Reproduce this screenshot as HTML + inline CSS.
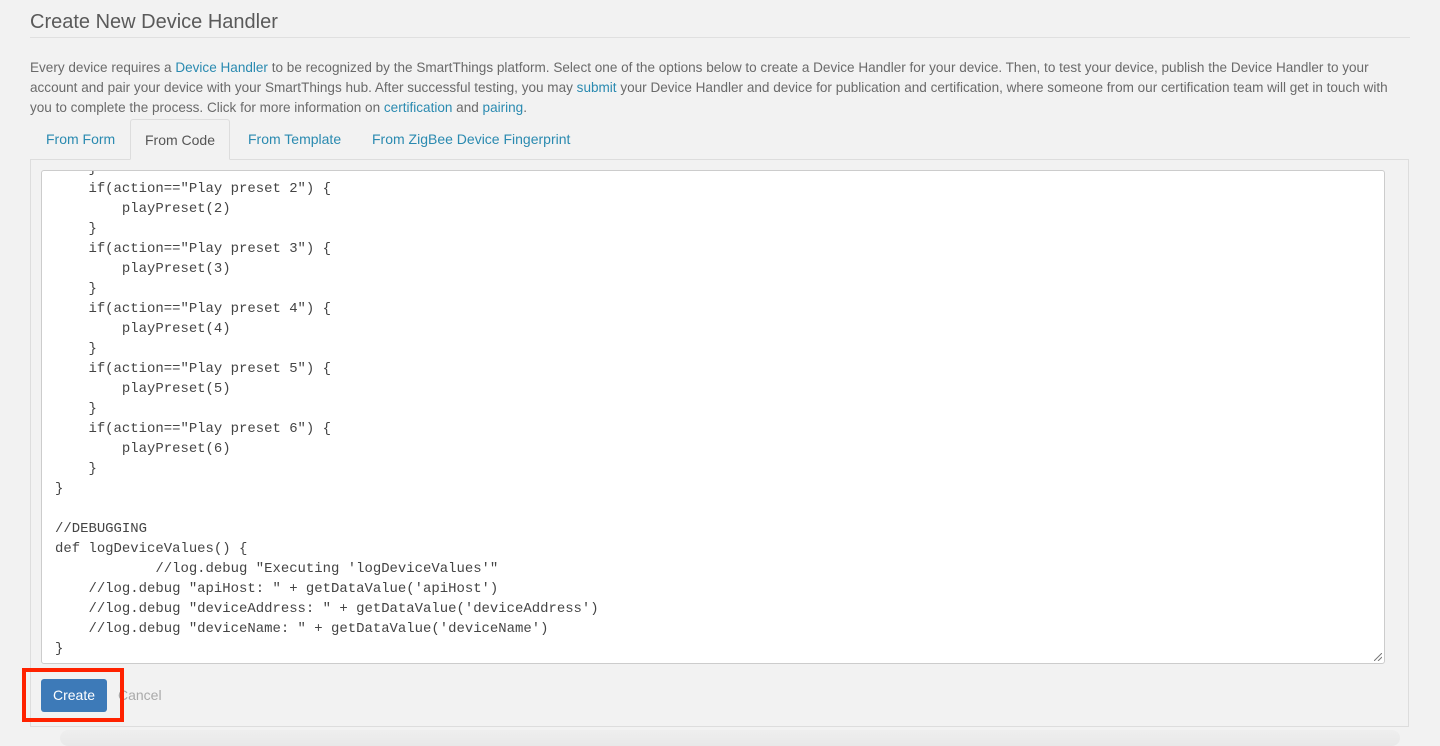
<!DOCTYPE html>
<html><head><meta charset="utf-8"><style>
body{margin:0;width:1440px;height:746px;background:#f2f2f2;font-family:"Liberation Sans",sans-serif;position:relative;overflow:hidden;color:#666}
.abs{position:absolute;white-space:nowrap}
a{color:#2a8ab0;text-decoration:none}
h1{position:absolute;left:30px;top:11px;margin:0;font-size:20px;font-weight:normal;color:#5a5a5a}
.rule{position:absolute;left:30px;top:37px;width:1380px;height:1px;background:#e0e0e0}
.p{font-size:13.55px;color:#6a6a6a;left:30px}
.tab{position:absolute;top:119px;height:40px;line-height:40px;font-size:14px;color:#2a8ab0}
.panel{position:absolute;left:30px;top:159px;width:1379px;height:568px;border:1px solid #ddd;box-sizing:border-box}
.ta{position:absolute;left:41px;top:170px;width:1344px;height:494px;background:#fff;border:1px solid #ccc;border-radius:3px;box-sizing:border-box;overflow:hidden}
pre{position:absolute;left:13px;top:-12px;margin:0;font-family:"Liberation Mono",monospace;font-size:13.95px;line-height:20px;color:#444}
</style></head><body>
<h1>Create New Device Handler</h1>
<div class="rule"></div>
<div class="abs p" style="top:60px">Every device requires a <a>Device Handler</a> to be recognized by the SmartThings platform. Select one of the options below to create a Device Handler for your device. Then, to test your device, publish the Device Handler to your</div>
<div class="abs p" style="top:80px">account and pair your device with your SmartThings hub. After successful testing, you may <a>submit</a> your Device Handler and device for publication and certification, where someone from our certification team will get in touch with</div>
<div class="abs p" style="top:100px">you to complete the process. Click for more information on <a>certification</a> and <a>pairing</a>.</div>
<div class="panel"></div>
<div class="tab" style="left:46px">From Form</div>
<div class="tab" style="left:130px;width:100px;box-sizing:border-box;border:1px solid #ddd;border-bottom:1px solid #f2f2f2;border-radius:3px 3px 0 0;text-align:center;color:#555;height:41px">From Code</div>
<div class="tab" style="left:248px">From Template</div>
<div class="tab" style="left:372px">From ZigBee Device Fingerprint</div>
<div class="ta"><pre>    }
    if(action=="Play preset 2") {
        playPreset(2)
    }
    if(action=="Play preset 3") {
        playPreset(3)
    }
    if(action=="Play preset 4") {
        playPreset(4)
    }
    if(action=="Play preset 5") {
        playPreset(5)
    }
    if(action=="Play preset 6") {
        playPreset(6)
    }
}

//DEBUGGING
def logDeviceValues() {
            //log.debug "Executing 'logDeviceValues'"
    //log.debug "apiHost: " + getDataValue('apiHost')
    //log.debug "deviceAddress: " + getDataValue('deviceAddress')
    //log.debug "deviceName: " + getDataValue('deviceName')
}</pre>
<svg style="position:absolute;right:2px;bottom:2px" width="8" height="8"><path d="M0 8L8 0M4 8L8 4" stroke="#777" stroke-width="1"/></svg></div>
<div class="abs" style="left:41px;top:679px;width:66px;height:33px;background:#3d7ab8;border-radius:3px;color:#fff;font-size:14px;line-height:33px;text-align:center">Create</div>
<div class="abs" style="left:118px;top:687px;font-size:14px;color:#aaa">Cancel</div>
<div class="abs" style="left:22px;top:668px;width:94px;height:46px;border:4px solid #ff2200"></div>
<div class="abs" style="left:60px;top:730px;width:1340px;height:16px;background:linear-gradient(#ececec,#e2e2e2);border-radius:8px;opacity:.6"></div>
</body></html>
